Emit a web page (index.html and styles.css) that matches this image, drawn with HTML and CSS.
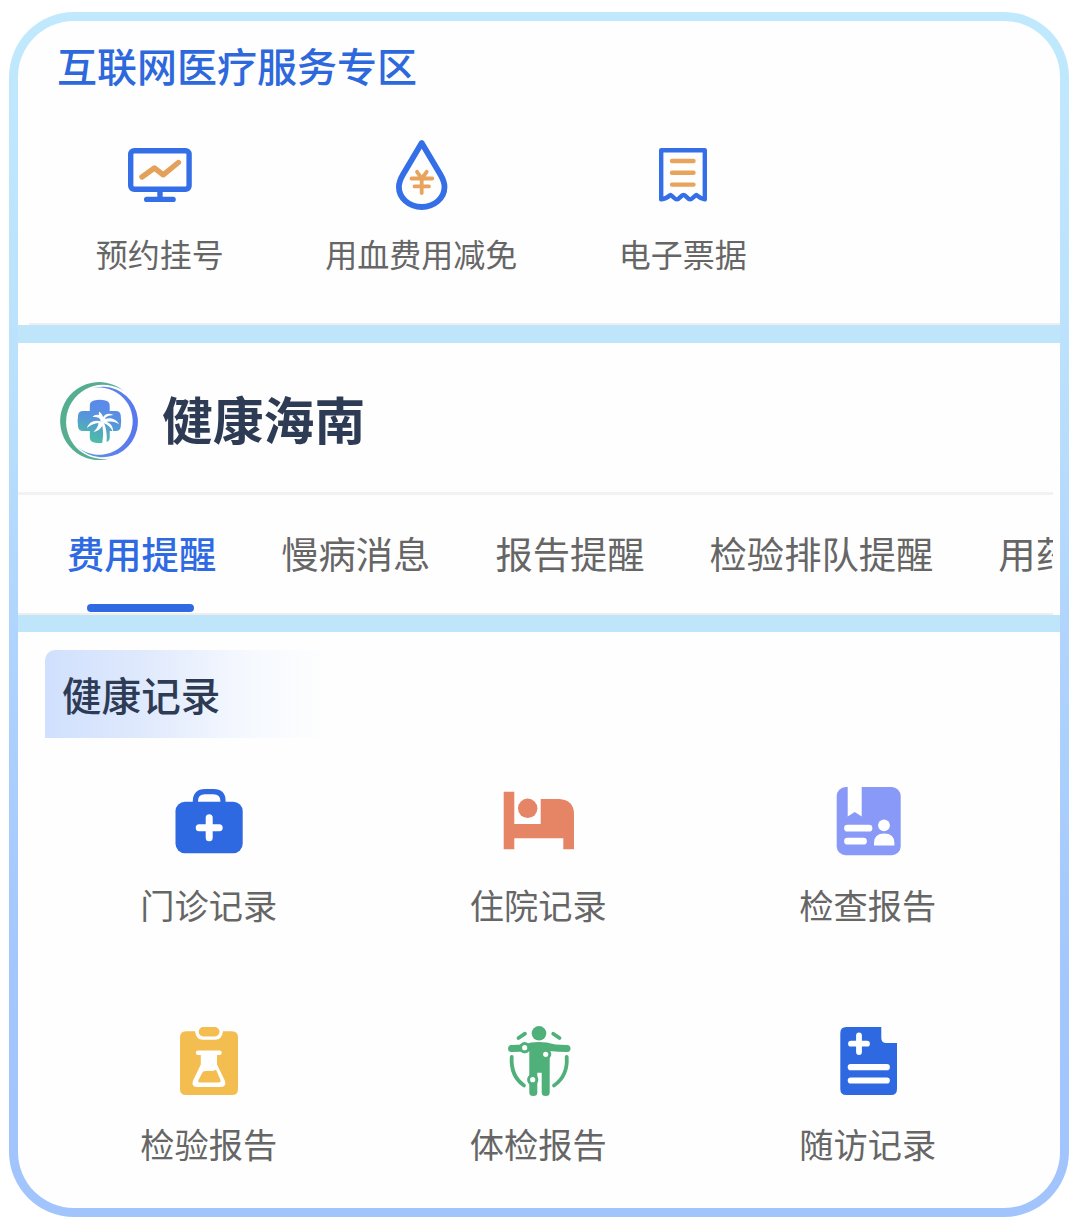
FILE: index.html
```html
<!DOCTYPE html>
<html lang="zh-CN">
<head>
  <meta charset="UTF-8">
  <meta name="viewport" content="width=device-width, initial-scale=1.0">
  <title>健康海南</title>
  <link rel="stylesheet" href="styles.css">
</head>
<body>
  <div class="frame">
    <div class="panel">

      <section class="services">
        <h2 class="services-title">互联网医疗服务专区</h2>
        <div class="services-grid">
          <a class="item">
            <svg class="icon" viewBox="0 0 80 80" fill="none" stroke="#356fe8" stroke-width="5.4" stroke-linecap="round" stroke-linejoin="round">
              <rect x="10.7" y="15.7" width="58.4" height="38.6" rx="3.5"/>
              <path d="M40 55v7M26.7 64.4h26.4"/>
              <path stroke="#e3a15c" stroke-width="5.4" d="M22 42l12.4-9 8.8 6.8L58.4 27.5"/>
            </svg>
            <span class="label">预约挂号</span>
          </a>
          <a class="item">
            <svg class="icon" viewBox="0 0 80 80" fill="none" stroke="#356fe8" stroke-width="5.8" stroke-linecap="round" stroke-linejoin="round">
              <path d="M40.7 8L22 39.5Q17.900 46.500 17.900 52A22.800 20 0 0 0 63.500 52Q63.500 46.500 59.400 39.500Z"/>
              <path stroke="#e8a45c" stroke-width="3.8" d="M36 36.800l4.700 6.700 5-6.700M30.500 43.500h20.800M33.500 51.400H48M40.700 43.500V58"/>
            </svg>
            <span class="label">用血费用减免</span>
          </a>
          <a class="item">
            <svg class="icon" viewBox="0 0 80 80" fill="none" stroke="#356fe8" stroke-width="4.4" stroke-linecap="round" stroke-linejoin="round">
              <path d="M18.200 15.200h43.600v49.200q-4.500-1-8.500-4.400c-2.200 1-3.800 4.400-6.300 4.400s-3.800-4.400-6.500-4.400-4 4.400-6.500 4.400-4-3.400-6.500-4.400q-4 3.600-9.300 4.400Z"/>
              <path stroke="#e8a45c" d="M29 26h21.500M29 37.800h21.500M29 49.600h21.500"/>
            </svg>
            <span class="label">电子票据</span>
          </a>
        </div>
      </section>

      <section class="brand">
        <header class="brand-header">
          <svg class="logo" viewBox="0 0 78 78">
            <defs>
              <linearGradient id="ringBlue" x1="0" y1="0" x2="1" y2="0">
                <stop offset="0" stop-color="#5a9fd0"/>
                <stop offset=".5" stop-color="#5f86e8"/>
                <stop offset="1" stop-color="#5578ee"/>
              </linearGradient>
              <linearGradient id="cross" x1=".7" y1="0" x2=".4" y2="1">
                <stop offset="0" stop-color="#5d86ee"/>
                <stop offset=".45" stop-color="#5793de"/>
                <stop offset="1" stop-color="#4cc0a0"/>
              </linearGradient>
            </defs>
            <path fill="#55ae90" d="M64 9A39 39 0 1 0 50 76.500A37.200 37.200 0 1 1 64 9Z"/>
            <path fill="url(#ringBlue)" d="M32 6.300A35.300 35.300 0 1 1 18 65.300A33.600 33.600 0 1 0 32 6.300Z"/>
            <path fill="url(#cross)" d="M34 18.500q5.700-1.500 11.500 0 4.200 1 4.200 5V29H56q4 0 4.700 4 1 6 0 12-.7 4-4.700 4h-6.300v6.500q0 4-4.200 5-5.800 1.200-11.500 0-4.200-1-4.200-5V49h-7q-4 0-4.700-4-1-6 0-12 .7-4 4.700-4h7v-5.500q0-4 4.200-5Z"/>
            <g fill="#fff">
              <path d="M40.500 38c2.500 6.500 3.500 14 1.500 24h4.500c1-10-.5-18-4-24.500Z"/>
              <path d="M42 39.500C40 35.500 37 34.500 32.500 35c3-3.500 8-2.500 10 1.500 1.500-4.500 6-6 11-3.500-5 .3-7.500 1.500-8.500 4 6-2 12 .5 14 5.500-4-3-8-3.500-12.500-2.500 4 1 7 4.500 6.500 10-2-4.500-5-7-9.500-9-1.500 4.500-4.500 8-10 9 3-3 4.500-5.500 5-9-4 .5-8 2-11.500 5 1.500-5.500 7-9 15-6.500Z"/>
              <path d="M41 39c-2-3.500-2.500-6-2-9.500 2.500 1.500 4.500 5 4.500 9Z"/>
            </g>
          </svg>
          <h1 class="brand-name">健康海南</h1>
        </header>
        <nav class="tabs">
          <a class="tab active">费用提醒</a>
          <a class="tab">慢病消息</a>
          <a class="tab">报告提醒</a>
          <a class="tab">检验排队提醒</a>
          <a class="tab">用药</a>
        </nav>
      </section>

      <section class="records">
        <h2 class="records-title">健康记录</h2>
        <div class="records-grid">
          <a class="item">
            <svg class="icon" viewBox="0 0 80 80">
              <rect x="6.500" y="19.700" width="67.200" height="51.600" rx="9.500" fill="#2f69e2"/>
              <path fill="none" stroke="#2f69e2" stroke-width="5.200" d="M26.400 21v-2q0-9.300 9.500-9.300h8.600q9.500 0 9.500 9.300v2"/>
              <path stroke="#fff" stroke-width="7" stroke-linecap="round" d="M40.200 35.700v20M30.200 45.700h20"/>
            </svg>
            <span class="label">门诊记录</span>
          </a>
          <a class="item">
            <svg class="icon" viewBox="0 0 80 80" fill="#e68565">
              <path d="M5.700 9.700h10.600V42h26.400V17H61q15 1 15 15v35.300H65.300v-11h-49v11H5.700Z"/>
              <circle cx="29.700" cy="26.300" r="9.700"/>
            </svg>
            <span class="label">住院记录</span>
          </a>
          <a class="item">
            <svg class="icon" viewBox="0 0 80 80">
              <rect x="8.700" y="5" width="64" height="68.200" rx="9" fill="#8999f7"/>
              <path fill="#fff" d="M19.700 4h14v30.500l-7-4.500-7 4.500ZM46 63.500v-2.500q0-9.500 10.200-9.500t10.200 9.500v2.500Z"/>
              <circle cx="56" cy="43.300" r="5.900" fill="#fff"/>
              <path stroke="#fff" stroke-width="6.800" stroke-linecap="round" d="M19.500 46.200H41M19.500 59.200h16"/>
            </svg>
            <span class="label">检查报告</span>
          </a>
          <a class="item">
            <svg class="icon" viewBox="0 0 80 80">
              <path fill="#f3bd50" d="M17 10.300h9q1 8.500 8 8.500h12q7 0 8-8.500h9q6 0 6 6V68q0 6-6 6H17q-6 0-6-6V16.300q0-6 6-6Z"/>
              <rect x="29.700" y="6" width="20.800" height="9.400" rx="4.700" fill="#f3bd50"/>
              <path fill="#fff" d="M29 29.600h21.500a2.200 2.200 0 0 1 0 4.400H48v9.500l8 16.500q1.500 6-4.500 6H28.300q-6 0-4.500-6l8-16.500V34H29a2.200 2.200 0 0 1 0-4.400Z"/>
              <path fill="#f3bd50" d="M34 50.500q5-1.300 8.500-.5 2.500 0 4.500-1.500L51.500 59q.5 2.500-2 2.500H31q-2.500 0-1.500-2.500Z"/>
            </svg>
            <span class="label">检验报告</span>
          </a>
          <a class="item">
            <svg class="icon" viewBox="0 0 80 80">
              <g fill="#4fb079">
                <circle cx="41" cy="12.300" r="7.300"/>
                <path d="M13.500 24Q27 24 33 21.500q8-1 16 0Q56 24 69 24a3.500 3.500 0 0 1 0 7Q60 31 51.700 30v41.500q0 3.500-4 3.500t-4-3.500V51.700h-4.400v19.800q0 3.500-4 3.500t-4-3.500V30Q23 31 13.500 31a3.500 3.500 0 0 1 0-7Z"/>
              </g>
              <path fill="none" stroke="#4fb079" stroke-width="3.800" stroke-linecap="round" d="M13.700 36Q12.500 55 26 64.500M68.700 36Q70 55 56 64.500M20.500 17l6.500-4.300M55.200 12.700L61.500 17"/>
              <g fill="#fff" stroke="#4fb079" stroke-width="3">
                <circle cx="26.700" cy="26.700" r="4.100"/>
                <circle cx="47.700" cy="33.300" r="4.100"/>
                <circle cx="34.700" cy="58.700" r="4.100"/>
              </g>
            </svg>
            <span class="label">体检报告</span>
          </a>
          <a class="item">
            <svg class="icon" viewBox="0 0 80 80">
              <path fill="#2f69e2" d="M18.300 6h35v11q0 5 5 5H69v46q0 6-6 6H18.300q-6 0-6-6V12q0-6 6-6Z"/>
              <path stroke="#fff" stroke-width="5.800" stroke-linecap="round" d="M31 14.500v16.500M23 22.700h16"/>
              <path stroke="#fff" stroke-width="6.200" stroke-linecap="round" d="M22.800 46.200h36M22.800 59.500h36"/>
            </svg>
            <span class="label">随访记录</span>
          </a>
        </div>
      </section>

    </div>
  </div>
</body>
</html>
```
FILE: styles.css
```css
* {
  box-sizing: border-box;
}
body {
  font-family: 'Noto Sans CJK SC', sans-serif;
  margin: 0;
  padding: 12px 11px 12px 9px;
  background: #fff;
  color: #666;
}
h1, h2 {
  margin: 0;
}

/* gradient outline */
.frame {
  height: 1205px;
  padding: 9px;
  border-radius: 65px;
  background: linear-gradient(#c1e9fd 0%, #bbe1fc 28%, #afd3fd 54%, #a3c6fd 80%, #a2c4fd 100%);
}
.panel {
  height: 100%;
  border-radius: 56px;
  background: #fefefe;
  overflow: hidden;
}

.item {
  display: flex;
  flex-direction: column;
  align-items: center;
}
.icon {
  display: block;
  width: 80px;
  height: 80px;
}

.services {
  height: 322px;
  padding: 14px 0 0 11px;
  border-bottom: 18px solid #bee5fa;
}
.services-title {
  padding-left: 28px;
  font-size: 40px;
  font-weight: 500;
  line-height: 60px;
  color: #2d68dc;
}
.services-grid {
  display: grid;
  grid-template-columns: repeat(3, 261.5px);
  height: 230px;
  padding-top: 40px;
  border-bottom: 2px solid #eee;
}
.services .label {
  margin-top: 18px;
  font-size: 32px;
  line-height: 40px;
}

.brand {
  height: 289px;
  padding-right: 7px;
  border-bottom: 17px solid #bee5fa;
}
.brand-header {
  display: flex;
  gap: 24px;
  height: 152px;
  padding: 39px 0 0 42px;
  border-bottom: 3px solid #f2f2f2;
}
.logo {
  width: 78px;
  height: 78px;
}
.brand-name {
  font-size: 50.8px;
  font-weight: 700;
  line-height: 72px;
  color: #2e3b55;
}
.tabs {
  display: flex;
  gap: 65px;
  height: 120px;
  padding-left: 49px;
  border-bottom: 2px solid #eee;
  overflow: hidden;
}
.tab {
  flex: none;
  font-size: 37.3px;
  line-height: 116px;
}
.tab.active {
  display: flex;
  flex-direction: column;
  font-weight: 500;
  color: #2f6ae3;
}
.tab.active::after {
  content: '';
  width: 107px;
  height: 8px;
  margin: -7px 0 0 20px;
  border-radius: 4px;
  background: #2f6ae3;
}

.records {
  padding: 18px 0 0 26px;
}
.records-title {
  width: 285px;
  margin-left: 1px;
  padding-left: 17px;
  border-radius: 10px 0 0 0;
  background: linear-gradient(90deg, #d0e0fd 0%, #dfe9fd 33%, #f4f8fe 68%, #fefefe 100%);
  font-size: 39.6px;
  font-weight: 500;
  line-height: 88px;
  color: #2e3b55;
}
.records-grid {
  display: grid;
  grid-template-columns: repeat(3, 329.5px);
  grid-auto-rows: 239px;
  padding-top: 44px;
}
.records .label {
  margin-top: 17px;
  font-size: 34.2px;
  line-height: 50px;
}
```
